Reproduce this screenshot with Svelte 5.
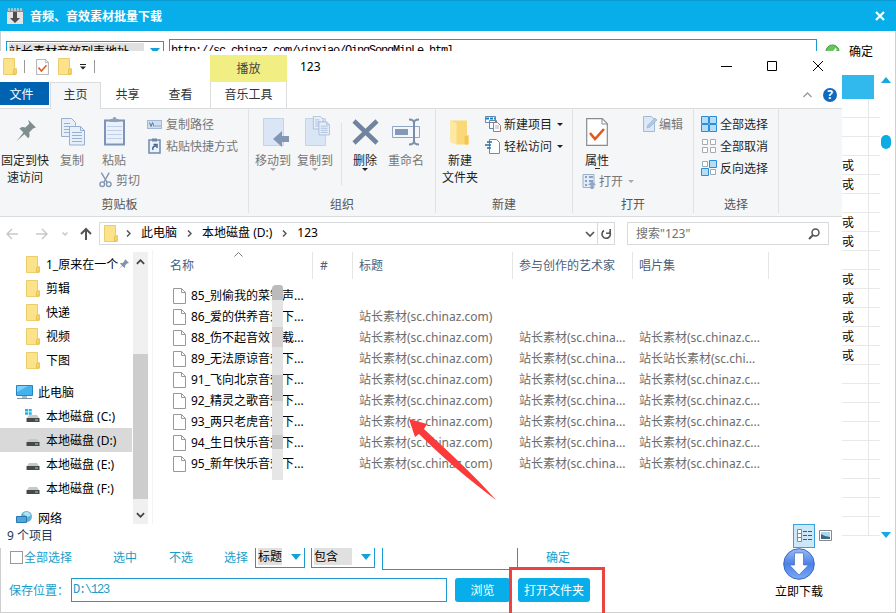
<script lang="ts">
	type Row = { name: string; title?: string; artist?: string; album?: string };

	const site = '站长素材(sc.chinaz.com)';
	const artist = '站长素材(sc.china...';
	const album = '站长素材(sc.chinaz.c...';

	const files: Row[] = [
		{ name: '85_别偷我的菜铃声...' },
		{ name: '86_爱的供养音效下...', title: site },
		{ name: '88_伤不起音效下载...', title: site, artist, album },
		{ name: '89_无法原谅音效下...', title: site, artist, album: '站长站长素材(sc.chi...' },
		{ name: '91_飞向北京音效下...', title: site, artist, album },
		{ name: '92_精灵之歌音效下...', title: site, artist, album },
		{ name: '93_两只老虎音效下...', title: site, artist, album },
		{ name: '94_生日快乐音效下...', title: site, artist, album },
		{ name: '95_新年快乐音效下...', title: site, artist, album }
	];

	const folders = ['1_原来在一个', '剪辑', '快递', '视频', '下图'];
	const drives = ['C', 'D', 'E', 'F'];
	let selectedDrive = $state('D');
	let savePath = $state('D:\\123');

	const cells = ['', '', '', '戓', '戓', '', '戓', '戓', '', '戓', '戓', '戓', '戓', '戓', '', '', '', '', '', '', '', '', ''];
</script>

{#snippet folderIcon()}
	<svg class="folder" viewBox="0 0 14 17" width="14" height="17">
		<path d="M.5.500h11v10l1.500 1v5H.5z" fill="#fce28b" stroke="#eccd6d" />
		<path d="M10.500 11.500 13.300 10.500v5.500h-2.800z" fill="#fbd766" stroke="#e4ba48" stroke-width=".8" />
	</svg>
{/snippet}

{#snippet docCheck(w: number, h: number)}
	<svg viewBox="0 0 22 28" width={w} height={h}>
		<path d="M.7.7h15.600l5 5v21.600H.7z" fill="#fff" stroke="#8b8b8b" stroke-width="1.200" />
		<path d="M16 .7v5.300h5.300" fill="none" stroke="#8b8b8b" />
		<path d="m4 15 5 6 9-10" fill="none" stroke="#e2571b" stroke-width="2.600" />
	</svg>
{/snippet}

{#snippet pages()}
	<g fill="#e6effa" stroke="#98afd1">
		<path d="M.5.500h10l4 4V18.500H.5z" />
		<path d="M3 5.500h6M3 8.500h8M3 11.500h8M3 14.500h8" />
		<path d="M8.500 8.500h11l4 4v14.500h-15z" />
		<path d="M19.500 8.500v4h4M11 14.500h10M11 17.500h10M11 20.500h10M11 23.500h10" fill="none" />
	</g>
{/snippet}

{#snippet caret()}
	<i class="caret"></i>
{/snippet}

<div class="app">
	<header class="app-title">
		<svg viewBox="0 0 16 16" width="16" height="16">
			<rect x="0" y="1" width="16" height="15" fill="#e3e3e3" />
			<path d="M0 1h16v3H0z" fill="#8c8c8c" />
			<path d="M2 0v3M5 0v3M8 0v3M11 0v3M14 0v3" stroke="#eee" />
			<path d="M6 4h4v6h3l-5 5-5-5h3z" fill="#4c4c4c" />
		</svg>
		<b>音频、音效素材批量下载</b>
		<svg class="app-close" viewBox="0 0 10 10" width="10" height="10">
			<path d="m1 1 8 8M9 1 1 9" stroke="#fff" stroke-width="2.200" />
		</svg>
	</header>

	<div class="source-row">
		<div class="combo source"><span>站长素材音效列表地址</span>{@render caret()}</div>
		<div class="url">http://sc.chinaz.com/yinxiao/QingSongMinLe.html</div>
		<svg viewBox="0 0 16 16" width="15" height="15">
			<circle cx="8" cy="8" r="7" fill="#67c45a" stroke="#479444" />
			<path d="m4 8 3 3 5-6" fill="none" stroke="#fff" stroke-width="2" />
		</svg>
		<span>确定</span>
	</div>

	<div class="results">
		<div class="result-col">
			<div class="result-head"></div>
			{#each cells as cell}
				<div class="result-cell"><span>{cell}</span></div>
			{/each}
		</div>
		<div class="result-scroll">
			<i class="tri up"></i>
			<i class="thumb"></i>
			<i class="tri"></i>
		</div>
	</div>

	<div class="bottom">
		<div class="bottom-left">
			<div class="filter-row">
				<i class="checkbox"></i>
				<span class="all">全部选择</span>
				<span class="link">选中</span>
				<span class="link">不选</span>
				<span class="link pick">选择</span>
				<div class="combo field"><span>标题</span>{@render caret()}</div>
				<div class="combo match"><span>包含</span>{@render caret()}</div>
				<div class="keyword"></div>
				<span class="ok">确定</span>
			</div>
			<div class="save-row">
				<span>保存位置：</span>
				<input bind:value={savePath} aria-label="保存位置" />
				<button class="browse">浏览</button>
				<button class="open">打开文件夹</button>
			</div>
		</div>
		<div class="download">
			<svg viewBox="0 0 32 32" width="32" height="32">
				<defs>
					<linearGradient id="ball" x2="0" y2="1">
						<stop offset="0" stop-color="#9bbcf5" />
						<stop offset=".5" stop-color="#4b80e6" />
						<stop offset="1" stop-color="#7baaf8" />
					</linearGradient>
				</defs>
				<circle cx="16" cy="16" r="15.300" fill="url(#ball)" stroke="#3b66bd" />
				<path d="M11.500 5h9v12h5L16 27 6.500 17h5z" fill="#fff" stroke="#4268bd" stroke-width=".7" />
			</svg>
			<span>立即下载</span>
		</div>
	</div>

	<section class="explorer">
		<div class="ex-title">
			<div class="qat">
				{@render folderIcon()}
				<i class="bar"></i>
				{@render docCheck(13, 16)}
				{@render folderIcon()}
				<svg viewBox="0 0 8 6" width="8" height="6"><path d="M1 .5h6" stroke="#222" /><path d="M1 2.500h6L4 5.500z" fill="#222" /></svg>
				<i class="bar"></i>
			</div>
			<div class="context">播放</div>
			<div class="ex-name">123</div>
			<div class="win-btns">
				<svg viewBox="0 0 12 12" width="12" height="12"><path d="M1 6.500h11" stroke="#000" /></svg>
				<svg viewBox="0 0 12 12" width="12" height="12"><path d="M1.500 1.500h9v9h-9z" fill="none" stroke="#000" /></svg>
				<svg viewBox="0 0 12 12" width="12" height="12"><path d="m1 1 10 10M11 1 1 11" stroke="#000" /></svg>
			</div>
		</div>

		<nav class="tabs">
			<div class="tab file">文件</div>
			<div class="tab home">主页</div>
			<div class="tab">共享</div>
			<div class="tab">查看</div>
			<div class="tab music">音乐工具</div>
			<div class="tabs-end">
				<svg viewBox="0 0 9 6" width="9" height="6"><path d="m.5 5 4-4 4 4" fill="none" stroke="#999" stroke-width="1.300" /></svg>
				<span class="help">?</span>
			</div>
		</nav>

		<div class="ribbon">
			<div class="group clipboard">
				<div class="tools">
					<div class="big pin">
						<svg viewBox="0 0 32 32" width="32" height="32">
							<path d="m26 6 8 8-3 1-4 4c1 3 0 5-1 6l-4-4-8 7 7-9-4-4c2-2 4-2 6-1l4-4z" transform="translate(-1 -2) scale(.97)" fill="#7f8f90" />
						</svg>
						<span>固定到快<br />速访问</span>
					</div>
					<div class="big copy muted">
						<svg viewBox="-4 -2 32 32" width="32" height="32">{@render pages()}</svg>
						<span>复制</span>
					</div>
					<div class="paste-col muted">
						<div class="big">
							<svg viewBox="0 0 32 32" width="32" height="32">
								<rect x="7" y="4.500" width="19" height="24" fill="#e9f1fc" stroke="#7d94b7" stroke-width="2" />
								<path d="M12 6V3h2.500a2 2 0 0 1 4 0H21v3z" fill="#8fa2bd" />
								<path d="M9 10.500h15M9 14.500h15M9 18.500h15M9 22.500h15" stroke="#bfd1ea" />
							</svg>
							<span>粘贴</span>
						</div>
						<div class="small cut">
							<svg viewBox="0 0 14 16" width="13" height="16" fill="none" stroke="#8296b1" stroke-width="1.500">
								<path d="m2.500 0 6.500 11M11 0 5 11" />
								<circle cx="3.500" cy="12.500" r="2.500" /><circle cx="10.500" cy="12.500" r="2.500" />
							</svg>
							剪切
						</div>
					</div>
					<div class="stack muted">
						<div class="small">
							<svg viewBox="0 0 15 14" width="15" height="14">
								<rect x=".5" y="3.500" width="14" height="8" fill="#cfdff2" stroke="#a1b8d8" />
								<path d="m2.500 5.500 1.500 4 1.500-4L7 9.500" fill="none" stroke="#5d7695" />
								<path d="M8.500 9h1m1 0h1m1 0h1" stroke="#5d7695" />
							</svg>
							复制路径
						</div>
						<div class="small">
							<svg viewBox="0 0 15 16" width="15" height="16">
								<rect x="2" y="2" width="11" height="13" fill="#eaf3fd" stroke="#7188aa" stroke-width="1.500" />
								<path d="M5 .5h5v3H5z" fill="#7188aa" />
								<path d="M6 12c-1-3 1-4 3-4M6.500 6.500H10V10" fill="none" stroke="#47678f" stroke-width="1.500" />
							</svg>
							粘贴快捷方式
						</div>
					</div>
				</div>
				<div class="group-name">剪贴板</div>
			</div>

			<div class="group organize">
				<div class="tools">
					<div class="big muted">
						<svg viewBox="0 0 32 32" width="32" height="32">
							<path d="M6.500 2.500h20v27h-20z" fill="#dae6f6" stroke="#c2d3ea" />
							<path d="m16 23 9-8v5h7v6h-7v5z" fill="#8297b5" />
						</svg>
						<span>移动到</span>{@render caret()}
					</div>
					<div class="big muted">
						<svg viewBox="0 0 32 32" width="32" height="32">
							<path d="M6.500 2.500h20v27h-20z" fill="#dae6f6" stroke="#c2d3ea" />
							<g transform="translate(14 0) scale(.7)">{@render pages()}</g>
						</svg>
						<span>复制到</span>{@render caret()}
					</div>
					<i class="divider"></i>
					<div class="big dark">
						<svg viewBox="0 0 32 32" width="32" height="32"><path d="m5 5 23 22M28 5 5 27" stroke="#71849f" stroke-width="4.500" /></svg>
						<span>删除</span>{@render caret()}
					</div>
					<div class="big muted">
						<svg viewBox="0 0 32 32" width="32" height="32">
							<path d="M2.500 10.500h27v11h-27z" fill="#f2f7fd" stroke="#91a6c3" />
							<path d="M5 13h13v6H5z" fill="#8499b8" />
							<path d="M19 3.500c4 0 5 1 5 4v17c0 3-1 4-5 4M29 3.500c-4 0-5 1-5 4v17c0 3 1 4 5 4" fill="none" stroke="#7c8ea7" stroke-width="2" />
						</svg>
						<span>重命名</span>
					</div>
				</div>
				<div class="group-name">组织</div>
			</div>

			<div class="group create">
				<div class="tools">
					<div class="big dark">
						<svg viewBox="0 0 32 32" width="32" height="32">
							<path d="M7 4.500h16v16h1.500v8H12z" fill="#fbd877" />
							<path d="m6 4 6.500 3v22L6 26z" fill="#fde9a6" />
							<path d="M20.500 20.500 24.500 19v9.500h-4z" fill="#f3c650" />
						</svg>
						<span>新建<br />文件夹</span>
					</div>
					<div class="stack">
						<div class="small">
							<svg viewBox="0 0 16 16" width="16" height="16" fill="#fff" stroke="#6289a5">
								<path d="M.5.500h10v6H.5zM4.500 4.500h7v8h-7z" /><path d="M1 2.500h9" stroke="#1b7dbd" stroke-width="2" stroke-dasharray="3 1" />
								<path d="M8.500 6.500h4l3 3v6h-7z" stroke="#ab7777" /><path d="M10 10h4m-4 2h4" stroke="#a9b4bd" />
							</svg>
							新建项目{@render caret()}
						</div>
						<div class="small">
							<svg viewBox="0 0 16 16" width="16" height="16">
								<path d="M4.500 1.500h7l3 3v11h-10z" fill="#fff" stroke="#7d8893" />
								<path d="M2 4h5M0 7h6M2 10h4" stroke="#286fa9" stroke-width="1.500" />
							</svg>
							轻松访问{@render caret()}
						</div>
					</div>
				</div>
				<div class="group-name">新建</div>
			</div>

			<div class="group opening">
				<div class="tools">
					<div class="prop-col">
						<div class="big dark">
							<div class="doc">{@render docCheck(22, 28)}</div>
							<span>属性</span><i class="dash"></i>
						</div>
						<div class="small muted">
							<svg viewBox="0 0 14 16" width="14" height="16">
								<path d="M1 1.500h11v13H1z" fill="#e1ebf9" stroke="#9eb0cc" />
								<path d="M3 4h2m2 0h4M3 8h2m2 0h4M3 12h2" stroke="#8ba1c1" stroke-width="2" />
								<path d="m10 8 4 4h-2.500v4h-3v-4H6z" fill="#93a6c4" />
							</svg>
							打开{@render caret()}
						</div>
					</div>
					<div class="stack muted">
						<div class="small">
							<svg viewBox="0 0 15 16" width="15" height="16">
								<path d="M1.500.500h8l3 3v12h-11z" fill="#dce8f7" stroke="#a3b9d7" />
								<path d="m5 12 1-3 7-7 2 2-7 7z" fill="#b5c8e2" stroke="#9bb2d1" stroke-width=".7" />
							</svg>
							编辑
						</div>
					</div>
				</div>
				<div class="group-name">打开</div>
			</div>

			<div class="group choose">
				<div class="tools">
					<div class="stack">
						<div class="small">
							<svg viewBox="0 0 16 16" width="16" height="16" fill="#b5ddf8" stroke="#2c8ed8">
								<path d="M.5.500h7v7h-7zM8.500.500h7v7h-7zM.5 8.500h7v7h-7zM8.500 8.500h7v7h-7z" />
							</svg>
							全部选择
						</div>
						<div class="small">
							<svg viewBox="0 0 16 16" width="16" height="16" fill="#fff" stroke="#aaa">
								<path d="M1.500 1.500h5v5h-5zM9.500 1.500h5v5h-5zM1.500 9.500h5v5h-5zM9.500 9.500h5v5h-5z" />
							</svg>
							全部取消
						</div>
						<div class="small">
							<svg viewBox="0 0 16 16" width="16" height="16">
								<path d="M1.500 1.500h5v5h-5zM9.500 9.500h5v5h-5z" fill="#fff" stroke="#9ab" />
								<path d="M8.500.500h7v7h-7zM.5 8.500h7v7h-7z" fill="#b5ddf8" stroke="#2c8ed8" />
							</svg>
							反向选择
						</div>
					</div>
				</div>
				<div class="group-name">选择</div>
			</div>
		</div>

		<div class="address">
			<div class="arrows">
				<svg viewBox="0 0 12 12" width="12" height="12"><path d="M12 6H1m5-5L1 6l5 5" /></svg>
				<svg viewBox="0 0 12 12" width="12" height="12"><path d="M0 6h11M6 1l5 5-5 5" /></svg>
				<svg viewBox="0 0 6 4" width="6" height="4"><path d="m.5.500 2.500 2.500L5.500.500" /></svg>
				<svg class="up-arrow" viewBox="0 0 12 14" width="12" height="14"><path d="M6 13V2M1 7l5-5 5 5" /></svg>
			</div>
			<div class="crumbs">
				{@render folderIcon()}
				{#each ['此电脑', '本地磁盘 (D:)', '123'] as part}
					<svg class="chev" viewBox="0 0 5 7" width="5" height="7"><path d="M1 .5 4 3.500l-3 3" /></svg>
					<span>{part}</span>
				{/each}
				<svg class="drop" viewBox="0 0 10 6" width="10" height="6"><path d="m1 1 4 4 4-4" /></svg>
				<div class="refresh">
					<svg viewBox="0 0 12 12" width="12" height="12" stroke="#555" stroke-width="1.600"><path d="M9.500 3.500a4.200 4.200 0 1 1-5.500-1" /><path d="M6 5.200h4.200V1" /></svg>
				</div>
			</div>
			<div class="search">
				<span>搜索"123"</span>
				<svg viewBox="0 0 12 12" width="12" height="12"><circle cx="7.500" cy="4.500" r="3.500" fill="none" stroke="#555" stroke-width="1.500" /><path d="m5 7-4 4" stroke="#555" stroke-width="2" /></svg>
			</div>
		</div>

		<div class="ex-body">
			<aside>
				{#each folders as folder, i}
					<div class="node sub">
						{@render folderIcon()}<span>{folder}</span>
						{#if i === 0}
							<svg class="tack" viewBox="0 0 10 10" width="10" height="10"><path d="m6 0 4 4-2 .5-2 2c.5 1 0 2-.5 2.500L3.500 7 0 10l3-3.500L1 4.500C2 4 3 4 3.500 4.300L5.500 2z" fill="#7e93a7" /></svg>
						{/if}
					</div>
				{/each}
				<div class="node root">
					<svg viewBox="0 0 17 16" width="17" height="16">
						<path d="M.5 1.500h16v10H.5z" fill="#43b2ee" stroke="#2686bd" /><path d="M1 8 12 2H1z" fill="#7ed0fa" />
						<path d="M6 12h5v2H6z" fill="#a8bdcb" /><path d="M1 14.500h15" stroke="#8296a6" />
					</svg>
					<span>此电脑</span>
				</div>
				{#each drives as drive}
					<div class="node sub" class:selected={drive === selectedDrive}>
						<svg viewBox="0 0 15 14" width="15" height="14">
							{#if drive === 'C'}
								<path d="M0 0h3v2.500H0zM3.700 0h3v2.500h-3zM0 3.200h3v2.500H0zM3.700 3.200h3v2.500h-3z" fill="#1eb4e4" />
							{/if}
							<path d="M4 6h8l2 3H2z" fill="#c6c8ca" /><path d="M1.500 9h13v4h-13z" fill="#45494b" />
							<path d="M10 11h3" stroke="#9ee09a" />
						</svg>
						<span>本地磁盘 ({drive}:)</span>
					</div>
				{/each}
				<div class="node root network">
					<svg viewBox="0 0 17 16" width="17" height="16">
						<circle cx="10.500" cy="6.500" r="5.500" fill="#5ab2dd" /><path d="M7 4c3-4 6-2 8 1l-3 2z" fill="#b5e0ef" />
						<path d="M.5 6.500h10v6H.5z" fill="#4ba7e0" stroke="#2a78ad" /><path d="M3 14.500h6" stroke="#73838e" />
					</svg>
					<span>网络</span>
				</div>
			</aside>
			<div class="scroll">
				<svg viewBox="0 0 10 6" width="9" height="6"><path d="m1 5 4-4 4 4" /></svg>
				<i></i>
				<svg viewBox="0 0 10 6" width="9" height="6"><path d="m1 1 4 4 4-4" /></svg>
			</div>
			<div class="files">
				<div class="line head">
					<span>名称<svg class="sort" viewBox="0 0 9 5" width="9" height="5"><path d="m.5 4.500 4-4 4 4" fill="none" stroke="#777" /></svg></span>
					<span>#</span><span>标题</span><span>参与创作的艺术家</span><span>唱片集</span>
				</div>
				{#each files as f}
					<div class="line">
						<span class="fname">
							<svg viewBox="0 0 13 16" width="13" height="16"><path d="M.5.500h8l4 4v11H.5zM8.500.500v4h4" fill="#fff" stroke="#999" /></svg>
							{f.name}
						</span>
						<span></span>
						<span>{f.title ?? ''}</span>
						<span>{f.artist ?? ''}</span>
						<span>{f.album ?? ''}</span>
					</div>
				{/each}
			</div>
		</div>

		<footer class="status">
			<span>9 个项目</span>
			<div class="views">
				<div class="detail-view">
					<svg viewBox="0 0 16 14" width="16" height="14"><path d="M1.500.500h4v12h-4zM1.500 4.500h4m-4 4h4" fill="#fff" stroke="#888" /><path d="M7 2.500h4m1 0h4M7 6.500h4m1 0h4M7 10.500h4m1 0h4" stroke="#555" /></svg>
				</div>
				<svg viewBox="0 0 13 11" width="13" height="11"><path d="M.5.500h12v10H.5z" fill="#fff" stroke="#888" /><path d="M2 2h9v7H2z" fill="#a9d6f1" /><path d="m2 4 4 2 5 1v2H2z" fill="#3a6785" /></svg>
			</div>
		</footer>
	</section>

	<!-- annotations -->
	<div class="smudge"></div>
	<svg class="pointer" viewBox="0 0 90 84" width="90" height="84">
		<path d="M1 2 19 7 16 12C42 36 66 58 88 83 60 62 34 40 11 17L7 20z" fill="#fb3a3a" />
	</svg>
	<div class="marker"></div>
</div>

<style>
	:global(body) {
		margin: 0;
	}

	.app {
		position: relative;
		box-sizing: border-box;
		width: 896px;
		height: 613px;
		display: flex;
		flex-direction: column;
		overflow: hidden;
		background: #fff;
		color: #000;
		font: 12px/17px 'Noto Sans', 'Noto Sans CJK SC', sans-serif;
		white-space: nowrap;
		box-shadow: inset 0 0 0 1px #cfcfcf;
	}

	.app *,
	.app *::before {
		box-sizing: border-box;
	}

	svg {
		display: block;
		flex: none;
	}

	.caret {
		flex: none;
		border: 3px solid transparent;
		border-top-color: currentColor;
		border-bottom: 0;
	}

	.app-title {
		flex: none;
		height: 31px;
		display: flex;
		align-items: center;
		gap: 7px;
		padding: 0 16px 0 7px;
		background: #08aeea;
		border-top: 1px solid #0a9ad2;
		color: #fff;
	}

	.app-close {
		margin-left: auto;
		margin-right: -5px;
	}

	.source-row {
		flex: none;
		height: 44px;
		padding: 8px 0 0 6px;
		display: flex;
		align-items: flex-start;
	}

	.source-row > svg {
		margin: 5px 9px 0 8px;
	}

	.source-row > span {
		margin-top: 4px;
	}

	.combo {
		display: flex;
		align-items: center;
		justify-content: space-between;
		border: 1px solid #1b9bd0;
		padding: 0 3px 0 2px;
	}

	.combo span {
		background: #e0e0e0;
	}

	.combo .caret {
		color: #15a0da;
		border-width: 6px 5px 0;
	}

	.combo.source {
		width: 158px;
		height: 22px;
		margin: 2px 5px 0 0;
		padding-bottom: 2px;
	}

	.source span {
		width: 135px;
		overflow: hidden;
	}

	.url {
		width: 648px;
		height: 24px;
		padding: 3px 1px;
		border: 1px solid #1b9bd0;
		font-family: 'Liberation Mono', monospace;
		letter-spacing: -1.2px;
	}

	.results {
		flex: 1;
		min-height: 0;
		display: flex;
		padding-left: 842px;
	}

	.result-col {
		width: 38px;
		overflow: hidden;
	}

	.result-head {
		width: 32px;
		height: 24px;
		background: #31b8ed;
	}

	.result-cell {
		height: 19px;
		border-bottom: 1px solid #e8e8e8;
	}

	.result-cell span {
		display: block;
		width: 27px;
		height: 19px;
		line-height: 20px;
		border-right: 1px solid #e8e8e8;
	}

	.result-scroll {
		display: flex;
		flex-direction: column;
		align-items: center;
		width: 12px;
		padding: 2px 0 10px;
	}

	.tri {
		border: 5px solid transparent;
		border-top: 6px solid #15a9e4;
		border-bottom: 0;
	}

	.tri.up {
		border-top: 0;
		border-bottom: 6px solid #15a9e4;
	}

	.thumb {
		width: 10px;
		height: 14px;
		margin: 52px 0 auto;
		border-radius: 5px;
		background: #0bace2;
	}

	.bottom {
		flex: none;
		height: 65px;
		display: flex;
		color: #189dc9;
	}

	.bottom-left {
		width: 760px;
	}

	.filter-row {
		height: 20px;
		display: flex;
		align-items: center;
		padding-left: 10px;
	}

	.checkbox {
		width: 13px;
		height: 13px;
		border: 1px solid #999;
		margin: -2px 1px 0 0;
	}

	.filter-row span {
		margin-top: -1px;
	}

	.all {
		width: 73px;
	}

	.link {
		width: 56px;
		padding-left: 16px;
	}

	.link.pick {
		width: 46px;
		padding-left: 15px;
	}

	.filter-row .combo {
		height: 22px;
		margin: -3px 6px 0 0;
		color: #000;
	}

	.combo.field {
		width: 50px;
	}

	.combo.match {
		width: 64px;
		margin-right: 7px;
	}

	.match span {
		width: 38px;
	}

	.keyword {
		width: 136px;
		height: 23px;
		border: 1px solid #1b9bd0;
		margin-right: 28px;
	}

	.save-row {
		height: 44px;
		display: flex;
		align-items: center;
		padding-left: 9px;
	}

	.save-row span {
		width: 62px;
	}

	.save-row input {
		width: 376px;
		height: 24px;
		padding: 0 1px;
		margin-right: 8px;
		border: 1px solid #1b9bd0;
		border-radius: 0;
		color: #189dc9;
		font: 12px 'Liberation Mono', monospace;
		letter-spacing: -1.2px;
	}

	.save-row button {
		height: 24px;
		padding: 0;
		border: 0;
		border-radius: 3px;
		background: #08aeea;
		color: #fff;
		font: inherit;
	}

	.save-row .browse {
		width: 55px;
		margin-right: 8px;
	}

	.save-row .open {
		width: 72px;
	}

	.download {
		width: 78px;
		display: flex;
		flex-direction: column;
		align-items: center;
		gap: 3px;
		color: #000;
	}

	/* file explorer window on top of the downloader */
	.explorer {
		position: absolute;
		left: 0;
		top: 51px;
		width: 842px;
		height: 497px;
		display: flex;
		flex-direction: column;
		background: #fff;
	}

	.ex-title {
		flex: none;
		height: 31px;
		display: flex;
		align-items: center;
		padding-left: 3px;
	}

	.qat {
		width: 207px;
		display: flex;
		align-items: center;
	}

	.qat .bar {
		width: 1px;
		height: 13px;
		background: #999;
		margin: 0 11px 0 7px;
	}

	.qat svg + .folder {
		margin: 0 7px 0 9px;
	}

	.context {
		align-self: flex-end;
		width: 77px;
		height: 27px;
		line-height: 27px;
		text-align: center;
		background: #f1ef84;
		color: #444;
	}

	.ex-name {
		margin-left: 13px;
	}

	.win-btns {
		margin: 0 18px 2px auto;
		display: flex;
		gap: 34px;
	}

	.tabs {
		flex: none;
		height: 27px;
		display: flex;
		border-bottom: 1px solid #dadbdc;
	}

	.tab {
		width: 53px;
		height: 27px;
		line-height: 25px;
		text-align: center;
		color: #333;
	}

	.tab.file {
		width: 49px;
		height: 23px;
		padding-right: 6px;
		margin-right: 1px;
		background: #0063b1;
		color: #fff;
	}

	.tab.home {
		width: 51px;
		border: 1px solid #dadbdc;
		border-bottom: 0;
		background: #f5f6f7;
		line-height: 24px;
	}

	.tab.music {
		width: 77px;
		margin-left: 3px;
		border: solid #ddd;
		border-width: 0 1px;
	}

	.tabs-end {
		margin-left: auto;
		padding-right: 5px;
		display: flex;
		align-items: center;
		gap: 11px;
	}

	.help {
		width: 14px;
		height: 14px;
		border-radius: 50%;
		background: #0f6abf;
		color: #fff;
		font-weight: bold;
		line-height: 14px;
		text-align: center;
	}

	.ribbon {
		flex: none;
		height: 108px;
		display: flex;
		background: #f5f6f7;
		border-bottom: 1px solid #dadbdc;
		color: #1f1f1f;
	}

	.group {
		display: flex;
		flex-direction: column;
		height: 104px;
		border-right: 1px solid #e1e2e3;
	}

	.tools {
		display: flex;
		height: 86px;
		padding-top: 4px;
	}

	.group-name {
		text-align: center;
		color: #555;
		margin-top: 1px;
	}

	.clipboard .group-name {
		padding-right: 9px;
	}

	.clipboard {
		width: 249px;
	}

	.organize {
		width: 187px;
	}

	.create {
		width: 137px;
	}

	.opening {
		width: 121px;
	}

	.choose {
		width: 85px;
	}

	.big {
		width: 42px;
		padding-top: 3px;
		display: flex;
		flex-direction: column;
		align-items: center;
		text-align: center;
	}

	.big > span {
		margin-top: 4px;
	}

	.big > .caret {
		margin-top: -1px;
	}

	.muted {
		color: #777;
	}

	.muted .caret {
		color: #aaa;
	}

	.pin {
		width: 50px;
	}

	.pin svg {
		margin-right: 10px;
	}

	.copy {
		width: 44px;
	}

	.copy svg {
		margin-left: 2px;
	}

	.paste-col {
		width: 53px;
	}

	.paste-col .big {
		width: 40px;
	}

	.small {
		height: 22px;
		display: flex;
		align-items: center;
		gap: 3px;
	}

	.small .caret {
		margin-left: 2px;
	}

	.small.cut {
		padding-left: 5px;
		gap: 4px;
	}

	.stack .small {
		gap: 4px;
	}

	.organize .tools {
		padding-left: 3px;
	}

	.organize .dark {
		width: 40px;
	}

	.divider {
		width: 1px;
		height: 62px;
		margin: 10px 3px 0 5px;
		background: #e1e2e3;
	}

	.create .tools {
		padding-left: 2px;
	}

	.create .big {
		width: 44px;
		margin-right: 3px;
	}

	.create .stack .small {
		gap: 3px;
	}

	.doc {
		height: 32px;
		padding-top: 2px;
	}

	.dash {
		width: 5px;
		height: 1px;
		background: #333;
		margin-top: -1px;
	}

	.prop-col {
		width: 59px;
		padding-left: 9px;
	}

	.opening .big {
		width: 30px;
		height: 57px;
	}

	.opening .stack {
		margin-left: 10px;
	}

	.opening .stack .small {
		gap: 2px;
	}

	.choose .stack {
		padding-left: 7px;
	}

	.choose .small {
		gap: 3px;
	}

	.address {
		flex: none;
		height: 33px;
		display: flex;
		align-items: center;
	}

	.address svg:not(.folder) path {
		fill: none;
	}

	.arrows {
		width: 99px;
		padding-left: 6px;
		display: flex;
		align-items: center;
		stroke: #c9c9c9;
		stroke-width: 1.5;
		gap: 18px;
	}

	.arrows svg + svg + svg {
		margin-left: -4px;
	}

	.arrows .up-arrow {
		margin-left: -6px !important;
		stroke: #555;
		stroke-width: 2;
	}

	.crumbs {
		width: 516px;
		height: 23px;
		display: flex;
		align-items: center;
		padding-left: 4px;
		border: 1px solid #d9d9d9;
	}

	.crumbs > span {
		margin-top: -2px;
	}

	.chev {
		margin: 0 10px 0 8px;
		stroke: #555;
		stroke-width: 1.5;
	}

	span + .chev {
		margin: 0 10px;
	}

	.drop {
		margin: 0 2px 0 auto;
		stroke: #555;
		stroke-width: 1.7;
	}

	.refresh {
		width: 17px;
		height: 21px;
		display: grid;
		place-items: center;
		border-left: 1px solid #d9d9d9;
	}

	.search {
		width: 202px;
		height: 23px;
		margin-left: 12px;
		padding: 0 8px;
		display: flex;
		align-items: center;
		justify-content: space-between;
		border: 1px solid #d9d9d9;
		color: #707070;
	}

	.ex-body {
		flex: none;
		height: 274px;
		display: flex;
		overflow: hidden;
	}

	aside {
		width: 132px;
		padding-top: 2px;
	}

	.node {
		height: 24px;
		display: flex;
		align-items: center;
		gap: 6px;
		padding-left: 26px;
	}

	.node.sub svg:not(.folder):first-child {
		margin-left: -1px;
	}

	.node.root {
		height: 24px;
		margin-top: 8px;
		padding-left: 16px;
		gap: 5px;
	}

	.node.network {
		margin-top: 6px;
	}

	.node.selected {
		background: #d9d9d9;
	}

	.node .tack {
		margin-left: -5px !important;
	}

	.scroll {
		width: 15px;
		margin: 2px 4px 0 1px;
		padding: 7px 0 6px;
		display: flex;
		flex-direction: column;
		align-items: center;
		background: #f0f0f0;
	}

	.scroll i {
		width: 15px;
		height: 145px;
		margin: auto 0 13px;
		background: #cdcdcd;
	}

	.scroll path {
		fill: none;
		stroke: #444;
		stroke-width: 2;
	}

	.files {
		flex: 1;
		border-left: 1px solid #f3f3f3;
	}

	.line {
		display: grid;
		grid-template-columns: 160px 40px 160px 120px 136px;
		height: 21px;
		line-height: 21px;
		color: #6d6d6d;
	}

	.line > span {
		padding-left: 6px;
	}

	.line > span:first-child {
		padding-left: 17px;
	}

	.line.head {
		height: 27px;
		margin: 2px 0 6px;
		line-height: 27px;
		color: #4c607a;
	}

	.head > span {
		border-right: 1px solid #e5e5e5;
	}

	.head > span:first-child {
		position: relative;
	}

	.head > span:nth-child(2) {
		padding-left: 7px;
	}

	.sort {
		position: absolute;
		left: 81px;
		top: 0;
	}

	.line .fname {
		display: flex;
		align-items: center;
		gap: 5px;
		padding-left: 20px !important;
		color: #000;
	}

	.status {
		flex: none;
		height: 24px;
		display: flex;
		justify-content: space-between;
		padding: 0 10px 0 7px;
		line-height: 23px;
		color: #1e395b;
	}

	.views {
		display: flex;
		align-items: center;
		gap: 4px;
		margin-top: -1px;
	}

	.detail-view {
		width: 22px;
		height: 24px;
		display: grid;
		place-items: center;
		background: #cce8f8;
		border: 1px solid #3aa2d8;
	}

	.smudge {
		position: absolute;
		left: 272px;
		top: 285px;
		width: 11px;
		height: 195px;
		background: linear-gradient(#bbb 0 15px, #e4e4e4 15px 42px, #d6d1d0 42px 62px, #e2e2e2 62px 90px, #cacaca 90px 116px, #dedede 116px 150px, #c9c9c9 150px 164px, #e6e6e6 164px);
		border-radius: 4px 3px 0 0;
	}

	.pointer {
		position: absolute;
		left: 408px;
		top: 417px;
	}

	.marker {
		position: absolute;
		left: 509px;
		top: 567px;
		width: 96px;
		height: 50px;
		border: 3px solid #ea4340;
	}
</style>
